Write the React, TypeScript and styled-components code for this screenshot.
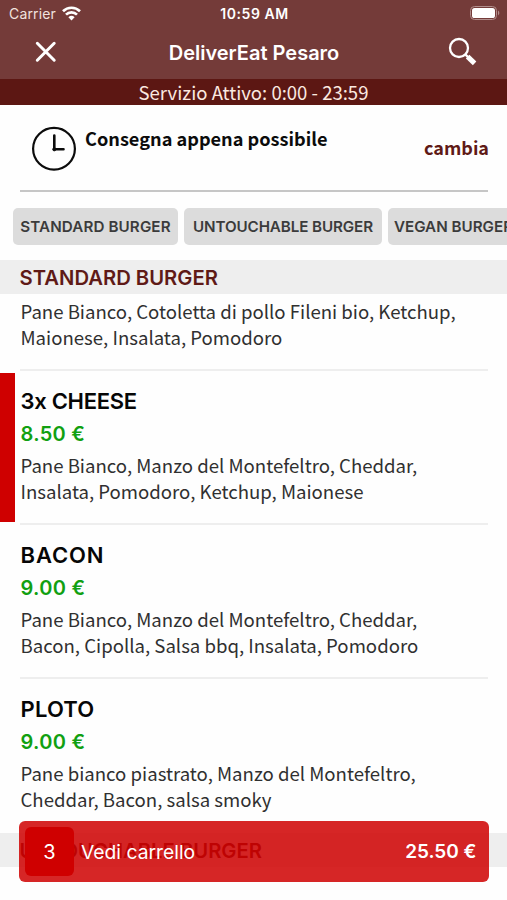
import React from "react";
import styled, { createGlobalStyle } from "styled-components";

const GlobalStyle = createGlobalStyle`
  * { box-sizing: border-box; }
  body { margin: 0; background: #fff; overflow: hidden; }
`;

const body = `"Noto Sans CJK SC", "Noto Sans", sans-serif`;
const heading = `Inter, "Liberation Sans", sans-serif`;

const Screen = styled.div`
  position: relative;
  width: 507px;
  height: 900px;
  overflow: hidden;
  display: flex;
  flex-direction: column;
  background: #fefefe;
  color: #2b2b2b;
  font-family: ${heading};
`;

const StatusBar = styled.div`
  display: grid;
  grid-template-columns: 1fr auto 1fr;
  align-items: center;
  height: 27px;
  padding: 0 7px 0 9px;
  background: #743b39;
  color: #fff;
`;

const Carrier = styled.div`
  display: flex;
  align-items: center;
  gap: 6px;
  font-size: 14px;
  letter-spacing: 0.15px;
  color: #f1e2df;
`;

const Clock = styled.div`
  font-size: 14px;
  font-weight: 600;
  letter-spacing: 0.55px;
`;

const Battery = styled.div`
  display: flex;
  justify-content: flex-end;
  padding-bottom: 1px;
`;

const NavBar = styled.header`
  display: grid;
  grid-template-columns: 92px 1fr 90px;
  align-items: center;
  height: 52px;
  padding-bottom: 2px;
  background: #743b39;
`;

const NavButton = styled.button`
  display: flex;
  justify-content: center;
  padding: 0;
  border: 0;
  background: none;
`;

const NavTitle = styled.h1`
  margin: 0 1px 0 0;
  padding-top: 1px;
  text-align: center;
  font-size: 20px;
  font-weight: 600;
  line-height: 24px;
  color: #fff;
`;

const ServiceBar = styled.div`
  height: 26px;
  background: #5c1713;
  color: #fbe9e0;
  text-align: center;
  font: 400 18.55px/25px ${body};
`;

const Delivery = styled.section`
  display: flex;
  align-items: flex-start;
  height: 87px;
  margin: 0 19px 0 20px;
  padding: 21px 0 0 11px;
  border-bottom: 2px solid #c6c6c6;
`;

const DeliveryText = styled.div`
  flex: 1;
  padding-left: 8px;
  color: #0c0c0c;
  font: 700 18.15px/25px ${body};
`;

const ChangeLink = styled.a`
  margin: 9px -1px 0 0;
  color: #5f1a17;
  font: 700 18px/25px ${body};
`;

const Chips = styled.nav`
  display: flex;
  flex: none;
  gap: 6px;
  height: 67.5px;
  padding: 16px 0 0 13px;
`;

const Chip = styled.button<{ $width: number; $spacing: number }>`
  flex: none;
  width: ${(p) => p.$width}px;
  height: 37px;
  padding: 1px 0 0;
  border: 0;
  border-radius: 5px;
  background: #dcdcdc;
  color: #3b3b3b;
  font: 600 15.2px/36px ${heading};
  letter-spacing: ${(p) => p.$spacing}px;
  white-space: nowrap;
`;

const SectionTitle = styled.h2`
  flex: none;
  height: 34px;
  margin: 0;
  padding-left: 19.5px;
  background: #eee;
  color: #5f1a17;
  font: 600 20.25px/36.5px ${heading};
`;

const Item = styled.article<{ $continued?: boolean; $last?: boolean }>`
  position: relative;
  flex: none;
  height: ${(p) => (p.$continued ? 77.5 : 154)}px;
  margin: 0 19px 0 20px;
  padding: ${(p) => (p.$continued ? 4.5 : 14)}px 0 0 0.5px;
  border-bottom: 2px solid ${(p) => (p.$last ? "transparent" : "#eeeeee")};
`;

const SelectedMark = styled.div`
  position: absolute;
  left: -20px;
  top: 2px;
  width: 14.5px;
  height: 149px;
  background: #cf0000;
`;

const ItemName = styled.h3<{ $spacing: number }>`
  margin: 0;
  color: #060606;
  font: 600 22px/33px ${heading};
  letter-spacing: ${(p) => p.$spacing}px;
`;

const Price = styled.div`
  color: #11a011;
  font: 600 20px/32px ${heading};
  letter-spacing: 0.3px;
`;

const Description = styled.p<{ $offset?: number }>`
  margin: ${(p) => p.$offset ?? 0}px 0 0;
  color: #303030;
  font: 400 18.6px/26px ${body};
  white-space: pre-line;
`;

const CartButton = styled.button`
  position: absolute;
  left: 19px;
  top: 821px;
  width: 470px;
  height: 61px;
  display: flex;
  align-items: center;
  padding: 0 12.5px 0 6px;
  border: 0;
  border-radius: 6px;
  background: rgba(207, 0, 0, 0.85);
  color: #fff;
  font: 400 20px/24px ${heading};
`;

const CartCount = styled.span`
  width: 49px;
  height: 49px;
  border-radius: 6px;
  background: #cf0000;
  line-height: 50px;
  text-align: center;
`;

const CartLabel = styled.span`
  flex: 1;
  padding-left: 7px;
  text-align: left;
  font-size: 19.3px;
`;

const CartTotal = styled.span`
  font-size: 19px;
  font-weight: 600;
`;

const chips = [
  { label: "STANDARD BURGER", width: 165, spacing: 0.1 },
  { label: "UNTOUCHABLE BURGER", width: 198, spacing: -0.1 },
  { label: "VEGAN BURGER", width: 131, spacing: 0 },
];

const items = [
  {
    name: "3x CHEESE",
    spacing: -0.3,
    price: "8.50 €",
    selected: true,
    description: "Pane Bianco, Manzo del Montefeltro, Cheddar,\nInsalata, Pomodoro, Ketchup, Maionese",
  },
  {
    name: "BACON",
    spacing: 0.9,
    price: "9.00 €",
    selected: false,
    description: "Pane Bianco, Manzo del Montefeltro, Cheddar,\nBacon, Cipolla, Salsa bbq, Insalata, Pomodoro",
  },
  {
    name: "PLOTO",
    spacing: 0.2,
    price: "9.00 €",
    selected: false,
    description: "Pane bianco piastrato, Manzo del Montefeltro,\nCheddar, Bacon, salsa smoky",
  },
];

export default function App() {
  return (
    <Screen>
      <GlobalStyle />
      <StatusBar>
        <Carrier>
          Carrier
          <svg width="19" height="15" viewBox="0 0 19 15" fill="none" stroke="#fff" strokeWidth="2.7">
            <path d="M1 5.2a12.2 12.2 0 0 1 17 0" />
            <path d="M4 8.6a7.8 7.8 0 0 1 11 0" />
            <path d="M9.5 14.4 6.4 11.2a4.5 4.5 0 0 1 6.2 0z" fill="#fff" stroke="none" />
          </svg>
        </Carrier>
        <Clock>10:59 AM</Clock>
        <Battery>
          <svg width="30" height="14" viewBox="0 0 30 14">
            <rect x="0.5" y="0.5" width="26" height="13" rx="4" fill="none" stroke="#b18d8b" />
            <rect x="2" y="2" width="23" height="10" rx="2.6" fill="#fff" />
            <path d="M28 4.6c1.8.8 1.8 4 0 4.8z" fill="#b18d8b" />
          </svg>
        </Battery>
      </StatusBar>
      <NavBar>
        <NavButton aria-label="Chiudi">
          <svg width="22" height="22" viewBox="0 0 22 22" stroke="#fff" strokeWidth="3" strokeLinecap="round">
            <path d="M2.3 2.3 19.2 19.2M19.2 2.3 2.3 19.2" />
          </svg>
        </NavButton>
        <NavTitle>DeliverEat Pesaro</NavTitle>
        <NavButton aria-label="Cerca">
          <svg width="30" height="30" viewBox="0 0 30 30" fill="none" stroke="#fff">
            <circle cx="12" cy="11" r="9" strokeWidth="2.3" />
            <path d="m18.3 17.3 3 3" strokeWidth="2.4" />
            <path d="m20.6 19.6 7 6.8" strokeWidth="5" />
          </svg>
        </NavButton>
      </NavBar>
      <ServiceBar>Servizio Attivo: 0:00 - 23:59</ServiceBar>
      <Delivery>
        <svg width="46" height="46" viewBox="0 0 46 46" fill="none" stroke="#0c0c0c">
          <circle cx="23" cy="22.8" r="20.9" strokeWidth="2.2" />
          <path d="M23.3 9.5V23.3H32.5" strokeWidth="2.6" strokeLinecap="round" />
          <circle cx="23.3" cy="23.3" r="1.6" fill="#0c0c0c" strokeWidth="0.8" />
        </svg>
        <DeliveryText>Consegna appena possibile</DeliveryText>
        <ChangeLink>cambia</ChangeLink>
      </Delivery>
      <Chips>
        {chips.map((chip) => (
          <Chip key={chip.label} $width={chip.width} $spacing={chip.spacing}>
            {chip.label}
          </Chip>
        ))}
      </Chips>
      <SectionTitle>STANDARD BURGER</SectionTitle>
      <Item $continued>
        <Description>{"Pane Bianco, Cotoletta di pollo Fileni bio, Ketchup,\nMaionese, Insalata, Pomodoro"}</Description>
      </Item>
      {items.map((item, index) => (
        <Item key={item.name} $last={index === items.length - 1}>
          {item.selected && <SelectedMark />}
          <ItemName $spacing={item.spacing}>{item.name}</ItemName>
          <Price>{item.price}</Price>
          <Description $offset={2}>{item.description}</Description>
        </Item>
      ))}
      <SectionTitle>UNTOUCHABLE BURGER</SectionTitle>
      <CartButton>
        <CartCount>3</CartCount>
        <CartLabel>Vedi carrello</CartLabel>
        <CartTotal>25.50 €</CartTotal>
      </CartButton>
    </Screen>
  );
}
